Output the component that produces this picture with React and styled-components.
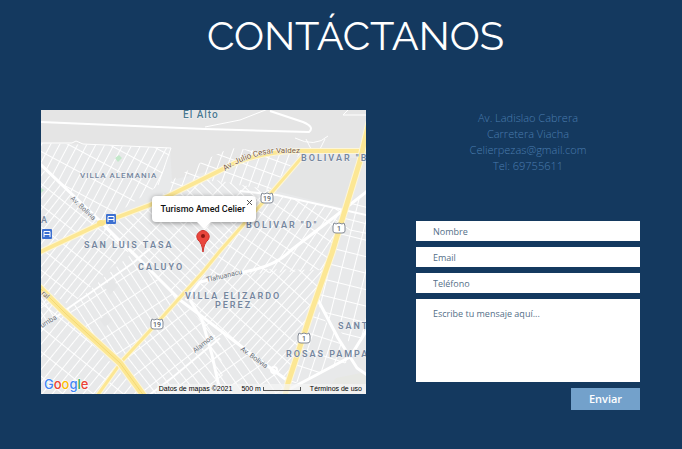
import React, { useState } from 'react';
import styled, { createGlobalStyle, css } from 'styled-components';

const GlobalStyle = createGlobalStyle`
  *, *::before, *::after { box-sizing: border-box; }
  body { margin: 0; background: #14395f; }
`;

const Page = styled.main`
  min-height: 100vh;
  padding: 8px 42px 39px 41px;
  background: #14395f;
  font-family: 'Open Sans', sans-serif;
`;

const Title = styled.h1`
  margin: 0 0 46px;
  padding-left: 30px;
  color: #fff;
  font: 400 40px/56px Raleway, Lato, sans-serif;
  text-align: center;
`;

const Columns = styled.div`
  display: grid;
  grid-template-columns: minmax(0, 325fr) minmax(0, 224fr);
  gap: 50px;
  align-items: start;
`;

const MapFrame = styled.section`
  position: relative;
  height: 284px;
  overflow: hidden;
  background: #e9eaeb;
  font-family: Roboto, sans-serif;
`;

const MapDrawing = styled.svg`
  display: block;
  width: 100%;
  height: 100%;
`;

const InfoWindow = styled.div`
  position: absolute;
  top: 86px;
  left: 50%;
  width: 104px;
  height: 26px;
  padding-left: 9px;
  transform: translateX(-50%);
  border-radius: 4px;
  background: #fff;
  box-shadow: 0 1px 5px rgba(0, 0, 0, 0.4);
  color: #111;
  font-size: 9px;
  font-weight: 500;
  line-height: 26px;
  white-space: nowrap;

  &::after {
    content: '';
    position: absolute;
    top: 100%;
    left: 50%;
    transform: translateX(-50%);
    border: 7px solid transparent;
    border-top-color: #fff;
    border-bottom: 0;
  }
`;

const CloseButton = styled.button`
  position: absolute;
  top: 2px;
  right: 2px;
  display: flex;
  padding: 1px;
  border: 0;
  background: none;
  cursor: pointer;
`;

const MapFooter = styled.footer`
  position: absolute;
  right: 0;
  bottom: 0;
  display: flex;
  align-items: center;
  gap: 9px;
  height: 10px;
  padding: 0 4px 0 2px;
  background: rgba(245, 245, 245, 0.7);
  color: #000;
  font: 400 7px/10px 'Liberation Sans', Arial, sans-serif;
  white-space: nowrap;
`;

const Scale = styled.span`
  display: flex;
  align-items: center;
  gap: 2px;
`;

const ScaleBar = styled.i`
  width: 38px;
  height: 4px;
  border: 1px solid #555;
  border-top: 0;
`;

const TermsLink = styled.a`
  color: inherit;
  text-decoration: none;
`;

const Contact = styled.section`
  display: flex;
  flex-direction: column;
  gap: 47px;
`;

const Address = styled.address`
  color: #4a7cae;
  font-size: 11px;
  font-style: normal;
  font-weight: 300;
  line-height: 16px;
  text-align: center;
`;

const MailLink = styled.a`
  color: inherit;
  text-decoration: none;
`;

const Form = styled.form`
  display: flex;
  flex-direction: column;
  gap: 6px;
`;

const field = css`
  display: block;
  width: 100%;
  border: 0;
  border-radius: 0;
  background: #fff;
  color: #14395f;
  font: 400 9px/12px 'Open Sans', sans-serif;
  &::placeholder { color: #546f88; opacity: 1; }
`;

const TextInput = styled.input`
  ${field}
  height: 20px;
  padding: 0 17px;
`;

const MessageInput = styled.textarea`
  ${field}
  height: 83px;
  padding: 9px 17px;
  resize: none;
`;

const SubmitButton = styled.button`
  align-self: flex-end;
  width: 69px;
  height: 22px;
  padding: 0;
  border: 0;
  background: #73a1cb;
  color: #fff;
  font: 600 11px/22px 'Open Sans', sans-serif;
  cursor: pointer;
`;

const Street = styled.path`
  fill: none;
  stroke: #fff;
  stroke-width: ${(p) => p.$width || 2};
  stroke-linejoin: round;
`;

const District = styled.text`
  fill: ${(p) => p.$color || '#75869e'};
  font: ${(p) => (p.$tight ? 500 : 600)} ${(p) => p.$size || 9}px Roboto, sans-serif;
  letter-spacing: ${(p) => (p.$tight ? '1px' : '2px')};
  paint-order: stroke;
  stroke: #f1f2f3;
  stroke-width: 1px;
`;

const RoadName = styled.text`
  fill: ${(p) => p.$color || '#6c737c'};
  font: 400 ${(p) => p.$size || 7}px Roboto, sans-serif;
  paint-order: stroke;
  stroke: #f4f4f4;
  stroke-width: 1px;
`;

const RouteNumber = styled.text`
  fill: #5e6670;
  font: 500 7px Roboto, sans-serif;
  text-anchor: middle;
`;

const HIGHWAYS = [
  { d: 'M38 253L102 223L150 205L205 178L235 163Q265 151 300 151H370', w: 4 },
  { d: 'M303 156L273 191L220 251L203 272L157 323L122 361L97 396', w: 3 },
  { d: 'M369 122L360 161L332 253L313 307L288 383L285 396', w: 5 },
  { d: 'M38 286L65 313L120 363L144 396', w: 6 },
];

const AVENUES = [
  { d: 'M38 162L97 218L120 241L130 250L180 300L200 315L250 353L288 381', w: 3 },
  { d: 'M38 330L70 307L133 263L160 240', w: 2 },
  { d: 'M186 300L200 282L253 270Q278 264 290 251L333 218L370 189', w: 3 },
  { d: 'M240 191L277 195L370 216', w: 2 },
  { d: 'M318 300L338 338L357 368L370 377', w: 3 },
  { d: 'M288 390L350 357L370 325', w: 3 },
  { d: 'M190 300L202 320L212 355L221 396', w: 3 },
  { d: 'M148 396L173 377L220 338', w: 2 },
  { d: 'M97 218L102 223L124 248', w: 2 },
  { d: 'M333 218L350 230L370 234', w: 1 },
];

const BLOCKS = [
  { id: 'north', w: 8, h: 19, angle: 28, points: '41,143 172,148 158,186 102,223 41,165' },
  { id: 'west', w: 7, h: 17, angle: 38, points: '41,168 97,218 130,250 70,306 41,286' },
  { id: 'mid', w: 7, h: 18, angle: -46, points: '98,224 157,203 205,178 270,190 220,251 180,298' },
  { id: 'valdez', w: 9, h: 14, angle: 20, points: '158,201 172,180 205,160 230,148 300,154 270,190 205,180' },
  { id: 'south', w: 8, h: 20, angle: -33, points: '41,332 130,255 180,300 156,323 120,360 41,292' },
  { id: 'corner', w: 8, h: 19, angle: 39, points: '41,292 142,394 41,394' },
  { id: 'lower', w: 8, h: 18, angle: -38, points: '120,365 180,300 220,340 224,394 142,394' },
  { id: 'elizardo', w: 7, h: 19, angle: 42, points: '204,275 260,269 324,270 287,380 202,316 188,298' },
  { id: 'center', w: 8, h: 15, angle: 34, points: '274,194 348,211 333,253 322,270 205,277 220,251' },
  { id: 'amed', w: 9, h: 16, angle: -35, points: '203,318 288,381 286,394 222,394' },
  { id: 'east', w: 12, h: 16, angle: 14, points: '366,190 366,330 356,350 316,303 334,250 347,211' },
  { id: 'rosas', w: 10, h: 17, angle: 18, points: '315,306 353,360 288,386' },
];

const SHIELDS = [
  { x: 267, y: 198, n: '19' },
  { x: 157, y: 324, n: '19' },
  { x: 339, y: 228, n: '1' },
  { x: 304, y: 338, n: '1' },
];

function Shield({ x, y, n }) {
  return (
    <g transform={`translate(${x} ${y})`}>
      <path
        d="M-5 -5L-3 -4L0 -5L3 -4L5 -5L6 -2V3Q6 5 3 5H-3Q-6 5 -6 3V-2Z"
        fill="#fff"
        stroke="#848b96"
      />
      <RouteNumber y="3">{n}</RouteNumber>
    </g>
  );
}

function Station({ x, y }) {
  return (
    <g transform={`translate(${x} ${y})`}>
      <rect x="-5" y="-5" width="10" height="10" rx="1" fill="#3d70d1" />
      <path d="M-3 3V-2.500H3V3M-3 .5H3" fill="none" stroke="#fff" />
    </g>
  );
}

function CityMap() {
  return (
    <MapDrawing viewBox="41 110 325 284" preserveAspectRatio="xMidYMid slice" role="img" aria-label="Mapa de El Alto">
      <defs>
        {BLOCKS.map((b) => (
          <pattern
            key={b.id}
            id={`blocks-${b.id}`}
            width={b.w}
            height={b.h}
            patternUnits="userSpaceOnUse"
            patternTransform={`rotate(${b.angle})`}
          >
            <path d={`M0 .5H${b.w}M.5 0V${b.h}`} stroke="#fff" strokeWidth="1" />
          </pattern>
        ))}
      </defs>
      <rect x="41" y="110" width="325" height="284" fill="#e8e9ea" />
      <path d="M41 110H366V150H300L172 180L170 148L41 143Z" fill="#e5e5e5" />
      <path d="M303 158L360 158L347 209L276 191Z" fill="#e4e5e5" />
      <path d="M325 394L336 378L366 372V394Z" fill="#e7e8e4" />

      {BLOCKS.map((b) => (
        <polygon key={b.id} points={b.points} fill={`url(#blocks-${b.id})`} />
      ))}
      <path d="M104 286L112 279L118 286L110 295ZM100 320L106 314L112 321L105 327Z" fill="#e5e6e7" />

      <Street $width="2" d="M41 122L205 129L309 132Q315 127 303 122L270 111" />
      <Street $width="1" d="M41 143L72 143L76 141L83 144L171 148L158 185M205 127L240 120L268 109M343 115H366M348 110L343 115" />
      <Street $width="1" d="M295 138Q315 148 328 136M306 139L312 151M325 139L319 151" />
      {AVENUES.map((a) => (
        <Street key={a.d} d={a.d} $width={a.w} />
      ))}
      {HIGHWAYS.map((h) => (
        <g key={h.d} fill="none" strokeLinejoin="round">
          <path d={h.d} stroke="#fdf6d8" strokeWidth={h.w + 2} />
          <path d={h.d} stroke="#fce794" strokeWidth={h.w} />
        </g>
      ))}
      <path d="M38 286L65 313L120 363L144 396" fill="none" stroke="#f5da71" />
      <ellipse cx="101" cy="223" rx="4" ry="3" fill="#fbe38b" />
      <circle cx="274" cy="370" r="3" fill="none" stroke="#fff" strokeWidth="2" />
      <path d="M115 158L119 155L122 158L118 162ZM41 188L44 190L41 193Z" fill="#c3e8ca" />

      <District x="183" y="118" $size="10" $color="#4b7890" $tight>El Alto</District>
      <District x="80" y="178" $size="8" $tight>VILLA ALEMANIA</District>
      <District x="84" y="248">SAN LUIS TASA</District>
      <District x="138" y="270">CALUYO</District>
      <District x="301" y="161">BOLIVAR "B</District>
      <District x="246" y="228">BOLIVAR "D"</District>
      <District x="185" y="299">VILLA ELIZARDO</District>
      <District x="215" y="308">PEREZ</District>
      <District x="338" y="329">SANT</District>
      <District x="286" y="357">ROSAS PAMPA</District>
      <District x="41" y="223" $tight>A</District>

      <path id="valdez-line" d="M225 171Q249 155 276 153L302 153" fill="none" />
      <RoadName $size="8" $color="#80603c">
        <textPath href="#valdez-line">Av. Julio Cesar Valdez</textPath>
      </RoadName>
      <RoadName transform="translate(70 199) rotate(43)">Av. Bolivia</RoadName>
      <RoadName transform="translate(240 350) rotate(36)">Av. Bolivia</RoadName>
      <RoadName transform="translate(207 282) rotate(-13)">Tlahuanacu</RoadName>
      <RoadName transform="translate(195 353) rotate(-38)">Alamos</RoadName>
      <RoadName transform="translate(42 328) rotate(-31)">umba</RoadName>
      <RoadName transform="translate(41 294) rotate(42)" $color="#75684b">ral</RoadName>

      {SHIELDS.map((s) => (
        <Shield key={`${s.x}-${s.y}`} {...s} />
      ))}
      <Station x={111} y={219} />
      <Station x={47} y={234} />

      <path d="M203 252Q202 243 198 240A6 6 0 1 1 208 240Q204 243 203 252Z" fill="#e9453c" stroke="#cf342e" strokeWidth="1" />
      <circle cx="203" cy="236" r="2" fill="#8b1712" />

      <text x="44" y="389" fontFamily="Inter, sans-serif" fontSize="13" fontWeight="500" stroke="#fff" strokeWidth="1" paintOrder="stroke">
        <tspan fill="#4285f4">G</tspan>
        <tspan fill="#ea4335">o</tspan>
        <tspan fill="#fbbc05">o</tspan>
        <tspan fill="#4285f4">g</tspan>
        <tspan fill="#34a853">l</tspan>
        <tspan fill="#ea4335">e</tspan>
      </text>
    </MapDrawing>
  );
}

export default function App() {
  const [infoOpen, setInfoOpen] = useState(true);

  return (
    <>
      <GlobalStyle />
      <Page>
        <Title>CONTÁCTANOS</Title>
        <Columns>
          <MapFrame>
            <CityMap />
            {infoOpen && (
              <InfoWindow>
                Turismo Amed Celier
                <CloseButton type="button" aria-label="Cerrar" onClick={() => setInfoOpen(false)}>
                  <svg width="7" height="7" viewBox="0 0 7 7" aria-hidden="true">
                    <path d="M1 1L6 6M6 1L1 6" stroke="#555" fill="none" />
                  </svg>
                </CloseButton>
              </InfoWindow>
            )}
            <MapFooter>
              <span>Datos de mapas ©2021</span>
              <Scale>500 m <ScaleBar /></Scale>
              <TermsLink href="#terminos">Términos de uso</TermsLink>
            </MapFooter>
          </MapFrame>
          <Contact>
            <Address>
              Av. Ladislao Cabrera<br />
              Carretera Viacha<br />
              <MailLink href="mailto:Celierpezas@gmail.com">Celierpezas@gmail.com</MailLink><br />
              Tel: 69755611
            </Address>
            <Form onSubmit={(e) => e.preventDefault()}>
              <TextInput name="nombre" placeholder="Nombre" aria-label="Nombre" />
              <TextInput name="email" type="email" placeholder="Email" aria-label="Email" />
              <TextInput name="telefono" type="tel" placeholder="Teléfono" aria-label="Teléfono" />
              <MessageInput name="mensaje" placeholder="Escribe tu mensaje aquí..." aria-label="Mensaje" />
              <SubmitButton type="submit">Enviar</SubmitButton>
            </Form>
          </Contact>
        </Columns>
      </Page>
    </>
  );
}
